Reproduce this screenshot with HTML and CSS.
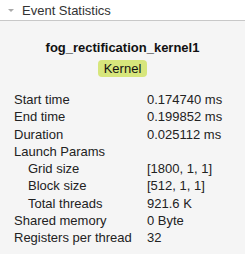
FILE: index.html
```html
<!DOCTYPE html>
<html lang="en">
<head>
    <meta charset="UTF-8">
    <title>Event Statistics</title>
    <link rel="stylesheet" href="styles.css">
</head>
<body>
    <div class="panel">
        <div class="panel-header">
            <span class="caret"></span>
            <span class="panel-title">Event Statistics</span>
        </div>
        <div class="panel-body">
            <div class="kernel-name">fog_rectification_kernel1</div>
            <div class="badge-row"><span class="badge">Kernel</span></div>

            <table class="stats">
                <tr><td>Start time</td><td>0.174740 ms</td></tr>
                <tr><td>End time</td><td>0.199852 ms</td></tr>
                <tr><td>Duration</td><td>0.025112 ms</td></tr>
                <tr><td>Launch Params</td><td></td></tr>
                <tr class="sub"><td>Grid size</td><td>[1800, 1, 1]</td></tr>
                <tr class="sub"><td>Block size</td><td>[512, 1, 1]</td></tr>
                <tr class="sub"><td>Total threads</td><td>921.6 K</td></tr>
                <tr><td>Shared memory</td><td>0 Byte</td></tr>
                <tr><td>Registers per thread</td><td>32</td></tr>
            </table>
        </div>
    </div>
</body>
</html>
```

FILE: styles.css
```css
body { margin: 0; font-family: "Liberation Sans", Arial, sans-serif; font-size: 13px; color: #222; background: #f5f5f5; }
.panel { width: 245px; height: 254px; background: #f5f5f5; }
.panel-header { display: flex; align-items: center; height: 20px; background: #fff; border-bottom: 1px solid #c8c8c8; }
.caret { width: 0; height: 0; margin: 0 8px 0 8px; border-left: 3px solid transparent; border-right: 3px solid transparent; border-top: 3px solid #aaa; }
.panel-title { color: #333; font-size: 13px; }
.panel-body { padding-top: 19px; }
.kernel-name { text-align: center; font-weight: bold; color: #111; }
.badge-row { text-align: center; margin-top: 5px; }
.badge { display: inline-block; background: #d7e67c; border-radius: 4px; padding: 1px 6px; line-height: 15px; color: #111; }
.stats { margin: 14px 0 0 10px; border-spacing: 0; }
.stats td { padding: 0 4px; height: 17.25px; line-height: 17px; white-space: nowrap; }
.stats td:first-child { width: 125px; }
.stats .sub td:first-child { padding-left: 18px; width: 111px; }
```
